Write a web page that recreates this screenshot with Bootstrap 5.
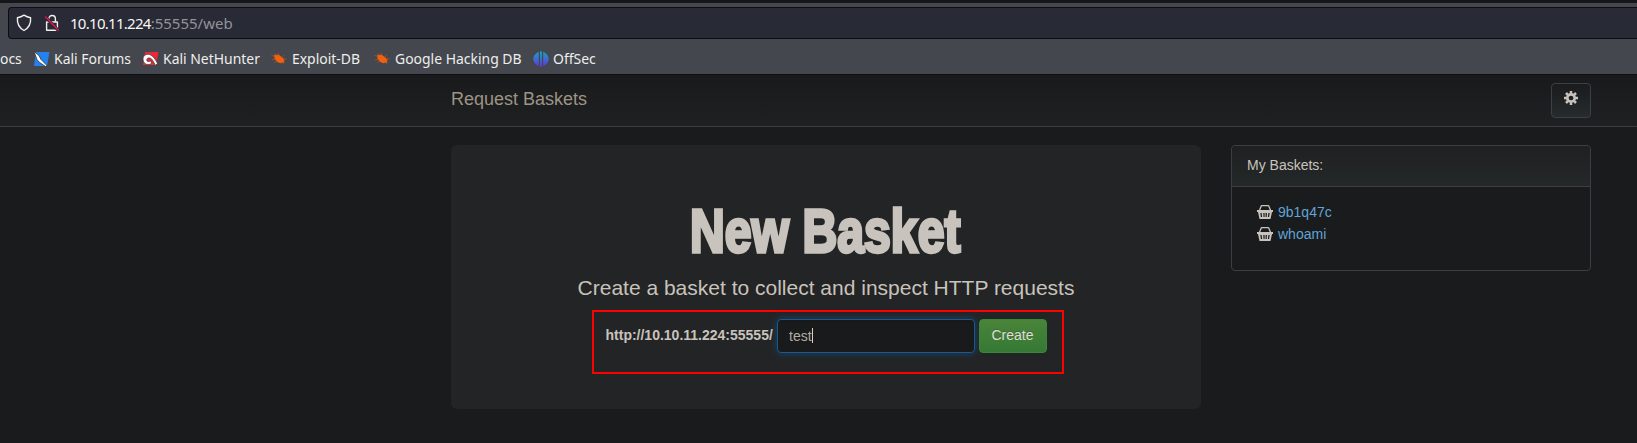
<!DOCTYPE html>
<html lang="en">
<head>
<meta charset="utf-8">
<title>Request Baskets</title>
<link rel="stylesheet" href="https://cdn.jsdelivr.net/npm/bootstrap@5.3.0/dist/css/bootstrap.min.css">
<style>
body{background:#1a1b1c;color:#c8c3bc;font:14px/20px "Liberation Sans",Arial,sans-serif;height:443px;overflow:hidden}
.browser{height:75px;background:#44474e;border-top:3px solid #14161a;border-bottom:1px solid #0c0e12;font-family:"Noto Sans",sans-serif;padding-top:4px}
.address{height:32px;margin-left:8px;background:#282a36;border:1px solid #0c0d12;border-right:0;border-radius:4px 0 0 4px;padding-left:7px;font-size:15px;color:#92939a}
.address b{font-weight:400;color:#f8f8f2;letter-spacing:-.72px}
.address .url{margin-left:10px}
.bookmarks{height:34px;font-size:13.95px;color:#eeeeec;white-space:nowrap;padding-top:5px}
.bookmarks svg{flex:none;margin-right:4px}
.bookmarks .ocs{width:33px}
.topnav{height:52px;padding:0 46px 0 451px;background:linear-gradient(#191a1b,#1f2021);border-bottom:1px solid #3b3e40}
.topnav .navbar-brand{font-size:18px;color:#9d9486;margin:0;padding:0;line-height:20px;margin-top:-4px}
.gear{width:40px;height:35px;border:1px solid #3b4043;border-radius:4px;background:linear-gradient(#1a1c1d,#262b2d);padding:0 0 5px;margin-top:-1px}
.main{padding:18px 46px 0 451px;gap:30px}
.hero{width:750px;height:264px;background:#232425;border-radius:6px;padding-top:51px}
.hero h1{font:bold 61px/70px "Liberation Sans Narrow","Liberation Sans",sans-serif;margin:0 1px 0 0;width:max-content;white-space:nowrap;transform:scaleX(.79);-webkit-text-stroke:3.4px #c8c3bc}
.hero p{font-size:21px;line-height:30px;margin:7px 0 0}
.marked{width:472px;height:64px;border:2px solid #f00;margin:7px 0 0 4px;padding:7px 0 0 12px}
.marked label{font-weight:700;width:171px;white-space:nowrap;padding-top:6px;text-indent:-.5px}
.field{width:198px;height:34px;border:1px solid #165a94;border-radius:4px;background:#181a1b;padding:0 11px 1px;box-shadow:inset 0 1px 1px rgba(0,0,0,.08),0 0 8px rgba(20,90,150,.6);color:#b2aca2}
.caret{width:1px;height:15px;background:#d5d0c8}
.create{width:68px;height:34px;margin-left:4px;padding:0 1px 2px 0;font-size:14px;line-height:20px;color:#e0ddd9;background:linear-gradient(#4a8439,#357935);border:1px solid #38883a;border-radius:4px;text-shadow:0 -1px 0 rgba(0,0,0,.2)}
.panel{width:360px;height:126px;border:1px solid #3b3f42;border-radius:4px;background:transparent;color:inherit}
.panel .card-header{height:41px;padding:9px 15px;border-bottom:1px solid #3b3f42;background:linear-gradient(#1f2021,#242829)}
.panel ul{padding:14px 0 0 25px;margin:0}
.panel li{height:22px}
.panel a{color:#60a4d8;text-decoration:none;margin-left:5px}
</style>
<script src="https://cdn.jsdelivr.net/npm/bootstrap@5.3.0/dist/js/bootstrap.bundle.min.js"></script>
</head>
<body>
<svg width="0" height="0" class="position-absolute">
 <symbol id="bug" viewBox="0 0 16 16"><path d="m3 4.4 1.8-.8 1.4.5 1.3-.6L9.4 5l2.8 2.2 1.4 1.7-.8 1.8 1 1.2-2.7-.4-1.3.7C7.2 12 4.7 10 3.6 7.6Z" fill="#f0600d"/><path d="M3.5 5.5.5 4.3M4 8 1 9M6 10l-2.6 1.6M8 4.5 7 2M11 6l2-1.8M12 8l3.6-.3M11 11l1.5 2M5 4.5 3.4 2.6" stroke="#b8511e" stroke-width=".8"/></symbol>
 <symbol id="basket" viewBox="0 0 16 14"><path d="M2.4 5.5 4 1.5Q4.2.7 5 .7h6q.8 0 1 .8l1.6 4" fill="none" stroke="#c8c3bc" stroke-width="1.3"/><path fill-rule="evenodd" fill="#c8c3bc" d="M0 5h16v2h-1l-1.5 7h-11L1 7H0ZM3.3 8l.6 4h1.2l-.5-4Zm3 0 .2 4h1.1V8Zm2.3 0v4h1.1l.2-4Zm2.8 0-.5 4h1.2l.6-4Z"/></symbol>
</svg>
<header class="browser">
 <div class="address d-flex align-items-center">
  <svg width="16" height="18" viewBox="0 0 16 18"><path d="M8 1.2Q11 3.2 14.6 3.8C15 9.5 12.8 14 8 16.5 3.2 14 1 9.5 1.4 3.8Q5 3.2 8 1.2Z" fill="none" stroke="#f0f0ec" stroke-width="1.4" stroke-linejoin="round"/></svg>
  <svg class="ms-2" width="20" height="18" viewBox="-4 0 20 18"><path d="M4.8 8V4.8a3.3 3.3 0 0 1 6.6 0V8M2.6 8h10.8v8.2H2.6Z" fill="none" stroke="#f0f0ec" stroke-width="1.4" stroke-linejoin="round"/><path d="m1.2 2.6 13.3 14" stroke="#282a36" stroke-width="3"/><path d="m1.2 2.6 13.5 14" stroke="#e0164e" stroke-width="1.5"/></svg>
  <span class="url"><b>10.10.11.224</b>:55555/web</span>
 </div>
 <nav class="bookmarks d-flex align-items-center">
  <span class="ocs">ocs</span>
  <svg width="17" height="16" viewBox="0 0 17 16"><path d="M3 1h13.5L14 15H1Z" fill="#2482ef"/><path d="m1 .5 5 4 2 4 6 6-1.5 1L6 11 4 8.5Z" fill="#fff" stroke="#333" stroke-width=".8"/></svg>
  <span style="width:88px">Kali Forums</span>
  <svg width="17" height="16" viewBox="0 0 17 16"><path d="M3 1h13.5L14 14H1Z" fill="#ed2835"/><path d="M1.2 9.5C.2 5 4 2.4 7.6 3.6 11 4.6 13 8 15.6 12.6l-2.2 1.6C11.6 11.5 10.5 7.2 7.4 7 4.4 6.8 4 9.8 6 10.6l3-.6.6 2.4C6 14.8 1.8 13 1.2 9.5Z" fill="#fff" stroke="#333" stroke-width=".7"/></svg>
  <span style="width:108px">Kali NetHunter</span>
  <svg width="17" height="16"><use href="#bug" width="16" height="16"/></svg>
  <span style="width:82px">Exploit-DB</span>
  <svg width="17" height="16"><use href="#bug" width="16" height="16"/></svg>
  <span style="width:138px">Google Hacking DB</span>
  <svg width="16" height="16" viewBox="0 0 16 16"><defs><linearGradient id="g" gradientUnits="userSpaceOnUse" x1="0" y1="0" x2="0" y2="16"><stop stop-color="#12a9bd"/><stop offset="1" stop-color="#6532df"/></linearGradient></defs><path d="M5.8.8v14.4C-1.6 12-1.6 4 5.8.8ZM7 .4h2v15.4H7ZM10.2.8v14.4C17.6 12 17.6 4 10.2.8Z" fill="url(#g)"/></svg>
  <span>OffSec</span>
 </nav>
</header>
<nav class="topnav d-flex align-items-center justify-content-between">
 <a class="navbar-brand" href="#">Request Baskets</a>
 <button class="gear btn d-flex align-items-center justify-content-center" aria-label="Settings"><svg width="14" height="14" viewBox="0 0 14 14"><path fill="none" stroke="#c8c3bc" stroke-width="2.7" d="M7 3.3a3.7 3.7 0 1 1 0 7.4 3.7 3.7 0 0 1 0-7.4Z"/><path stroke="#c8c3bc" stroke-width="2.5" d="M7 0v2.6M7 11.4V14M0 7h2.6M11.4 7H14M2 2l1.8 1.8M10.2 10.2 12 12M12 2l-1.8 1.8M3.8 10.2 2 12"/></svg></button>
</nav>
<main class="main d-flex align-items-start">
 <section class="hero d-flex flex-column align-items-center">
  <h1>New Basket</h1>
  <p>Create a basket to collect and inspect HTTP requests</p>
  <form class="marked d-flex align-items-start">
   <label>http://10.10.11.224:55555/</label>
   <div class="field d-flex align-items-center">test<span class="caret"></span></div>
   <button type="button" class="create btn">Create</button>
  </form>
 </section>
 <aside class="panel card">
  <div class="card-header">My Baskets:</div>
  <ul class="list-unstyled">
   <li class="d-flex align-items-center"><svg width="16" height="14"><use href="#basket"/></svg><a href="#">9b1q47c</a></li>
   <li class="d-flex align-items-center"><svg width="16" height="14"><use href="#basket"/></svg><a href="#">whoami</a></li>
  </ul>
 </aside>
</main>
</body>
</html>
